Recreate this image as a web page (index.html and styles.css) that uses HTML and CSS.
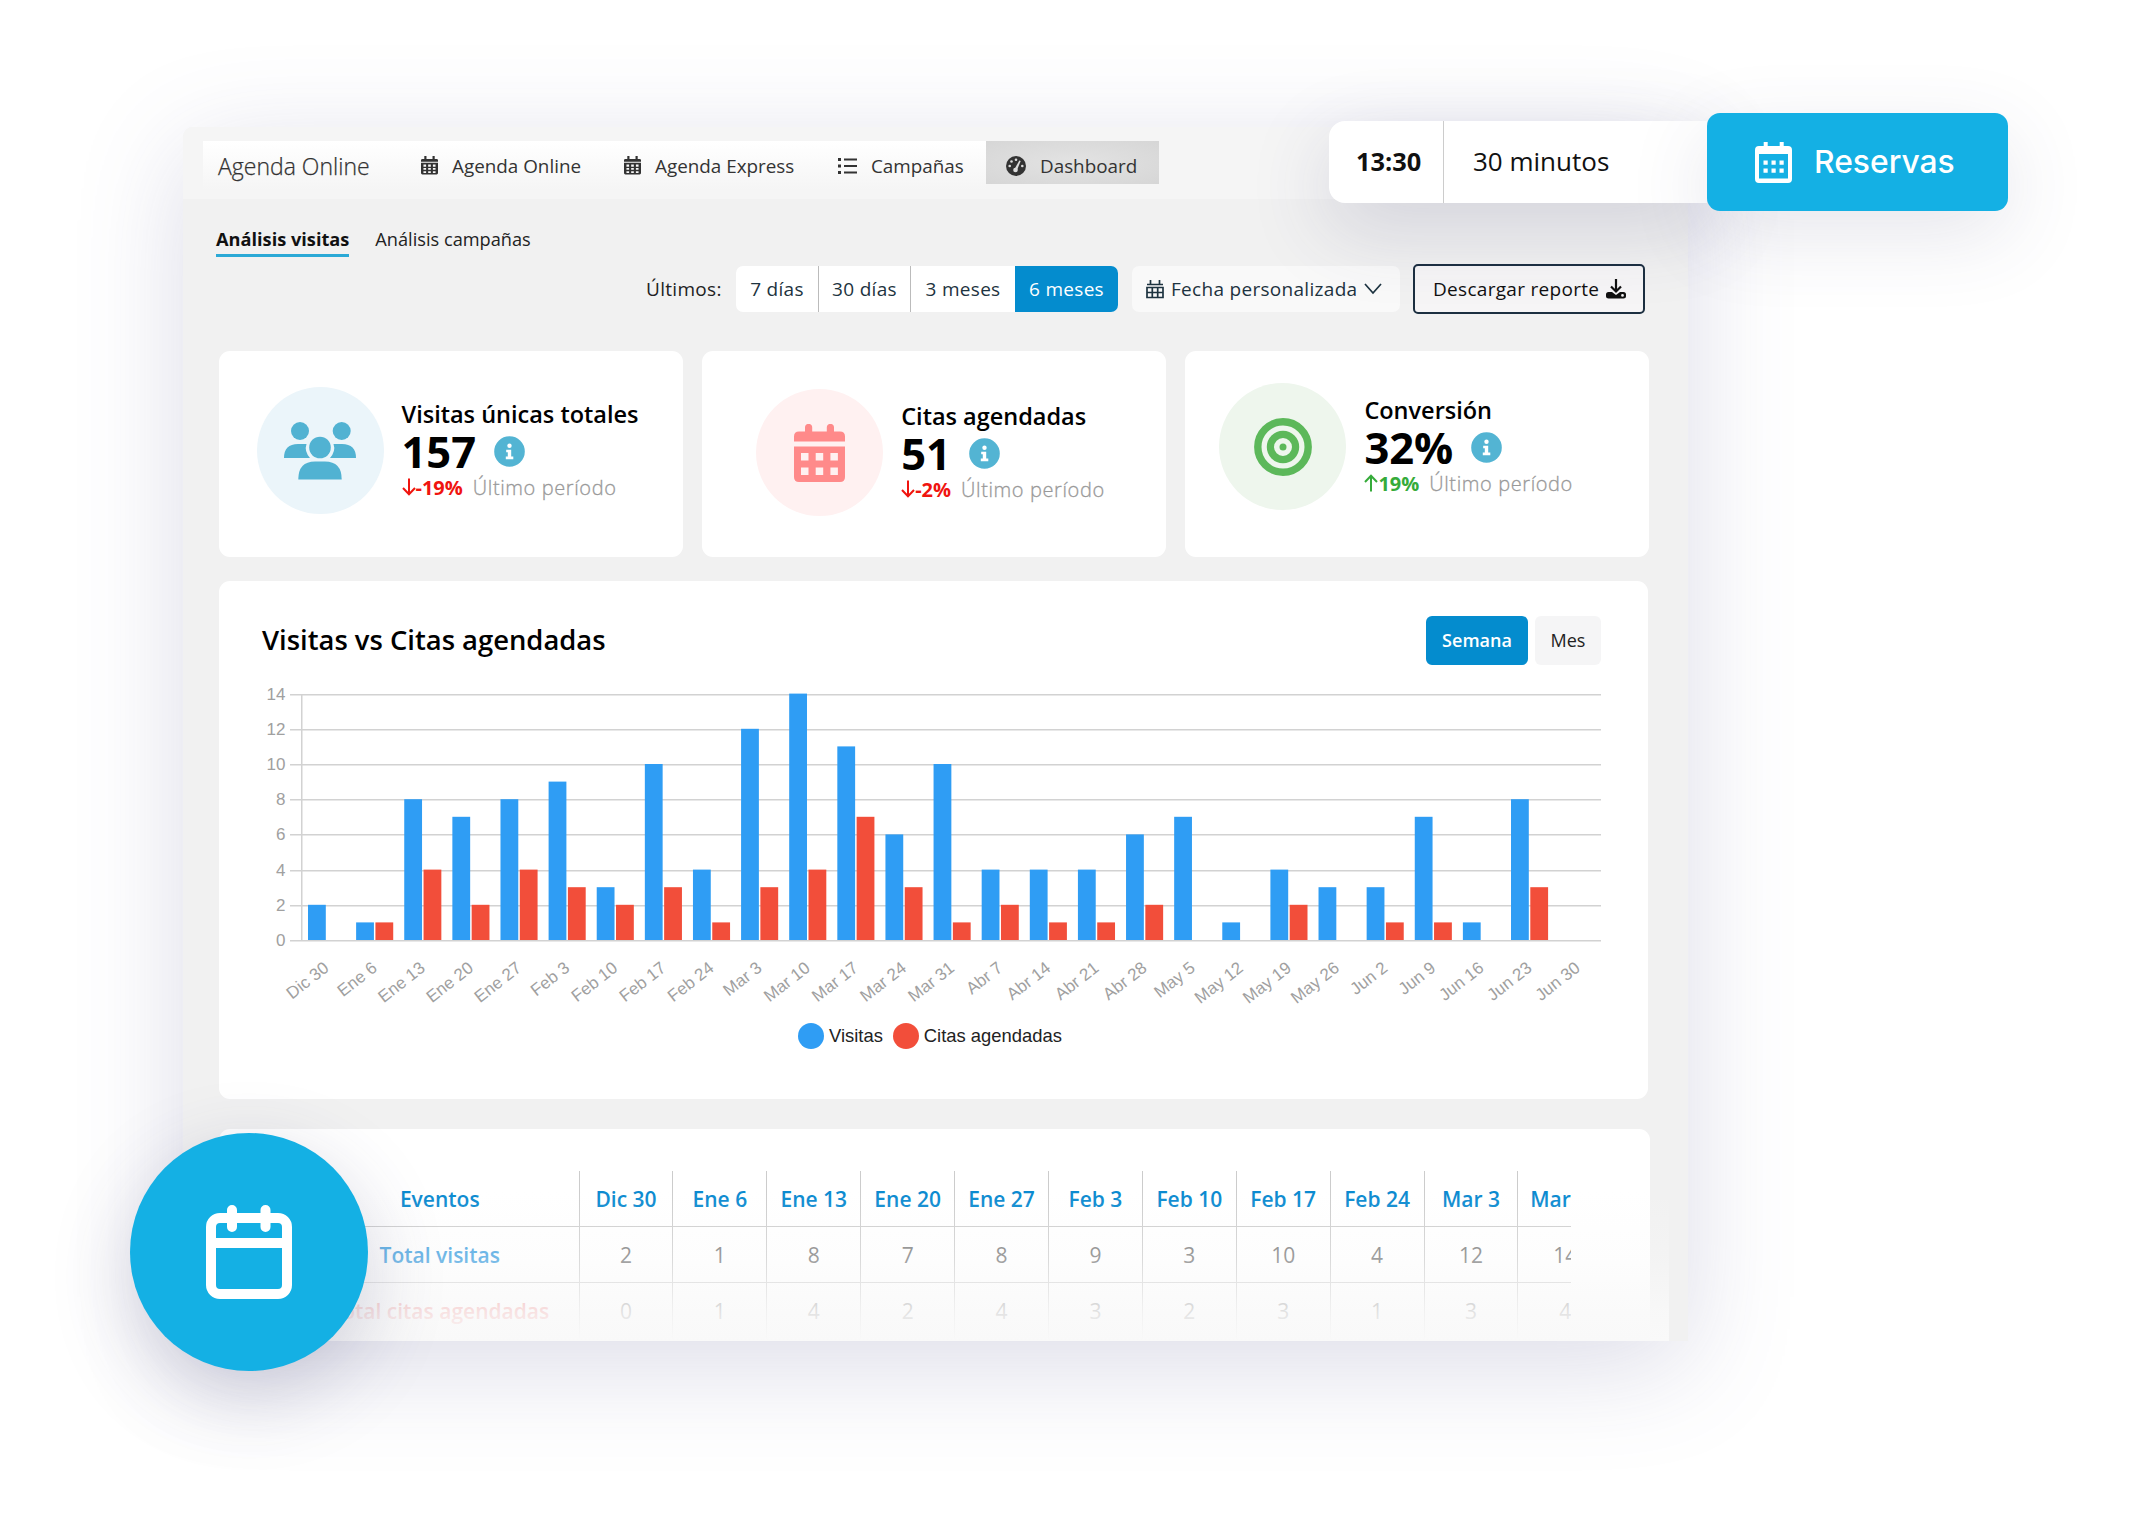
FILE: index.html
```html
<!DOCTYPE html>
<html lang="es">
<head>
<meta charset="utf-8">
<title>Agenda Online</title>
<link rel="stylesheet" href="styles.css">
</head>
<body>
<svg class="sprite" aria-hidden="true">
  <symbol id="i-cal" viewBox="0 0 18 20"><path d="M1.5 3H16.5Q18 3 18 4.5V6H0V4.500Q0 3 1.500 3ZM3.500 0H5.800V4H3.500ZM12.200 0H14.500V4H12.200Z"/><path fill-rule="evenodd" d="M0 7H18V18Q18 19.500 16.500 19.500H1.500Q0 19.500 0 18ZM2.600 9V11.200H5.400V9ZM7.600 9V11.200H10.400V9ZM12.600 9V11.200H15.400V9ZM2.600 12.600V14.600H5.400V12.600ZM7.600 12.600V14.600H10.400V12.600ZM12.600 12.600V14.600H15.400V12.600ZM2.600 16V18H5.400V16ZM7.600 16V18H10.400V16ZM12.600 16V18H15.400V16Z"/></symbol>
  <symbol id="i-info" viewBox="0 0 31 31"><circle cx="15.500" cy="15.500" r="15.300" fill="#53b4d3"/><circle cx="15.500" cy="9.700" r="2.200" fill="#fff"/><path fill="#fff" d="M12.200 13.700H17.200V20.500H19.300V23.200H11.800V20.500H13.800V16.300H12.200Z"/></symbol>
  <symbol id="i-down" viewBox="0 0 14 18"><path d="M7 .5V16M1 10L7 16.300L13 10" fill="none" stroke="currentColor" stroke-width="2"/></symbol>
  <symbol id="i-up" viewBox="0 0 14 18"><path d="M7 17.500V2M1 8L7 1.700L13 8" fill="none" stroke="currentColor" stroke-width="2"/></symbol>
</svg>

<main class="panel">
  <header class="topbar">
    <nav class="nav">
      <span class="brand">Agenda Online</span>
      <a class="nav-item nav-1"><svg class="ic-cal"><use href="#i-cal"/></svg><span>Agenda Online</span></a>
      <a class="nav-item nav-2"><svg class="ic-cal"><use href="#i-cal"/></svg><span>Agenda Express</span></a>
      <a class="nav-item nav-3"><svg class="ic-list" viewBox="0 0 19 16"><path d="M0 0H3V3H0ZM0 6.500H3V9.500H0ZM0 13H3V16H0ZM6 .6H19V2.400H6ZM6 7.100H19V8.900H6ZM6 13.600H19V15.400H6Z"/></svg><span>Campañas</span></a>
    </nav>
    <a class="nav-active"><svg class="ic-dash" viewBox="0 0 20 20"><circle cx="10" cy="10" r="10"/><g fill="#ddd"><circle cx="3.700" cy="10" r="1.300"/><circle cx="5.500" cy="5.500" r="1.300"/><circle cx="10" cy="3.700" r="1.300"/><circle cx="16.300" cy="10" r="1.300"/><circle cx="9.500" cy="14" r="2.300"/><path d="M8.600 13L13.300 4.500L14.700 5.100L11 14Z"/></g></svg><span>Dashboard</span></a>
  </header>

  <div class="tabs">
    <a class="tab tab-on">Análisis visitas</a>
    <a class="tab">Análisis campañas</a>
  </div>

  <div class="filters">
    <span class="label">Últimos:</span>
    <div class="range">
      <button class="r1">7 días</button><button class="r2">30 días</button><button class="r3">3 meses</button><button class="r4">6 meses</button>
    </div>
    <button class="custom"><svg class="ic-grid" viewBox="0 0 18 20"><path d="M1 5.500H17M1 8.500H17V18.500H1ZM1 13.500H17M6.300 8.500V18.500M11.700 8.500V18.500M4.500 1V5M13.500 1V5" fill="none" stroke="currentColor" stroke-width="1.700"/></svg><span>Fecha personalizada</span><svg class="ic-chev" viewBox="0 0 18 12"><path d="M1 1L9 10L17 1" fill="none" stroke="currentColor" stroke-width="1.700"/></svg></button>
    <button class="report"><span>Descargar reporte</span><svg class="ic-dl" viewBox="0 0 20 20"><path d="M10 0V12M5 7.500L10 12.500L15 7.500" fill="none" stroke="currentColor" stroke-width="2.200"/><path fill-rule="evenodd" d="M2.500 13H6L10 16L14 13H17.500Q20 13 20 15.500V17.500Q20 19.500 17.500 19.500H2.500Q0 19.500 0 17.500V15.500Q0 13 2.500 13ZM16.500 15A1.400 1.400 0 1 0 16.500 17.800A1.400 1.400 0 1 0 16.500 15Z"/></svg></button>
  </div>

  <section class="stats">
    <article class="stat stat-a">
      <div class="disc disc-blue"><svg width="72" height="58" viewBox="0 0 72 58"><circle cx="16" cy="9" r="9"/><circle cx="57.700" cy="9" r="9"/><path d="M0 36Q0 22 14 22H22.500Q20 29 26 36ZM72 36Q72 22 58 22H49.500Q52 29 46 36Z"/><circle cx="36" cy="25.500" r="10.800"/><path d="M14.300 57.500Q14.300 39.500 31 39.500H41Q57.700 39.500 57.700 57.500Z"/></svg></div>
      <div class="stat-body">
        <h3>Visitas únicas totales</h3>
        <div class="value"><b>157</b><svg class="info"><use href="#i-info"/></svg></div>
        <div class="delta down"><svg><use href="#i-down"/></svg><b>-19%</b><span>Último período</span></div>
      </div>
    </article>
    <article class="stat stat-b">
      <div class="disc disc-red"><svg width="51" height="58" viewBox="0 0 51 58"><path d="M5 7.500H11V3.500A3.600 3.600 0 0 1 18.200 3.500V7.500H32.800V3.500A3.600 3.600 0 0 1 40 3.500V7.500H46Q51 7.500 51 12.500V17.500H0V12.500Q0 7.500 5 7.500Z"/><path fill-rule="evenodd" d="M0 22.500H51V53Q51 58 46 58H5Q0 58 0 53ZM7 29V36.500H14.500V29ZM21.700 29V36.500H29.200V29ZM36.400 29V36.500H43.900V29ZM7 43.500V51H14.500V43.500ZM21.700 43.500V51H29.200V43.500ZM36.400 43.500V51H43.900V43.500Z"/></svg></div>
      <div class="stat-body">
        <h3>Citas agendadas</h3>
        <div class="value"><b>51</b><svg class="info"><use href="#i-info"/></svg></div>
        <div class="delta down"><svg><use href="#i-down"/></svg><b>-2%</b><span>Último período</span></div>
      </div>
    </article>
    <article class="stat stat-c">
      <div class="disc disc-green"><svg width="58" height="58" viewBox="0 0 58 58"><g fill="none" stroke="currentColor"><circle cx="29" cy="29" r="25.200" stroke-width="7.400"/><circle cx="29" cy="29" r="12.600" stroke-width="7.200"/></g><circle cx="29" cy="29" r="3.500"/></svg></div>
      <div class="stat-body">
        <h3>Conversión</h3>
        <div class="value"><b>32%</b><svg class="info"><use href="#i-info"/></svg></div>
        <div class="delta up"><svg><use href="#i-up"/></svg><b>19%</b><span>Último período</span></div>
      </div>
    </article>
  </section>

  <section class="chart-card">
    <div class="chart-head">
      <h2>Visitas vs Citas agendadas</h2>
      <div class="toggle"><button class="on">Semana</button><button class="off">Mes</button></div>
    </div>
    <svg id="chart" width="1382" height="330" viewBox="240 680 1382 330"></svg>
    <div class="legend"><i class="dot-blue"></i><span>Visitas</span><i class="dot-red"></i><span>Citas agendadas</span></div>
  </section>

  <section class="table-card">
    <div class="table-clip">
      <table>
        <tr><th class="ev">Eventos</th><th>Dic 30</th><th>Ene 6</th><th>Ene 13</th><th>Ene 20</th><th>Ene 27</th><th>Feb 3</th><th>Feb 10</th><th>Feb 17</th><th>Feb 24</th><th>Mar 3</th><th>Mar 10</th></tr>
        <tr><td class="ev visits">Total visitas</td><td>2</td><td>1</td><td>8</td><td>7</td><td>8</td><td>9</td><td>3</td><td>10</td><td>4</td><td>12</td><td>14</td></tr>
        <tr class="last"><td class="ev appts">Total citas agendadas</td><td>0</td><td>1</td><td>4</td><td>2</td><td>4</td><td>3</td><td>2</td><td>3</td><td>1</td><td>3</td><td>4</td></tr>
      </table>
    </div>
  </section>
  <div class="fade"></div>
</main>

<div class="booking">
  <div class="slot"><b>13:30</b><span>30 minutos</span></div>
  <button class="reserve"><svg width="37" height="41" viewBox="0 0 37 41"><path fill-rule="evenodd" d="M4 4H8.700V0H12.700V4H24.700V0H28.700V4H33Q37 4 37 8V37Q37 41 33 41H4Q0 41 0 37V8Q0 4 4 4ZM4 12V36.500H33V12Z"/><path d="M8.500 18.500H12.700V22.700H8.500ZM16.500 18.500H20.700V22.700H16.500ZM24.500 18.500H28.700V22.700H24.500ZM8.500 26.500H12.700V30.700H8.500ZM16.500 26.500H20.700V30.700H16.500ZM24.500 26.500H28.700V30.700H24.500Z"/></svg><span>Reservas</span></button>
</div>
<div class="bubble"><svg width="86" height="94" viewBox="0 0 86 94"><g fill="none" stroke="#fff" stroke-width="10"><rect x="5" y="13" width="76" height="76" rx="9"/><path d="M5 38H81"/><path d="M26 5V22M59.500 5V22" stroke-linecap="round"/></g></svg></div>
<script src="chart.js"></script>
</body>
</html>
```
FILE: styles.css
```css
* { box-sizing: border-box; margin: 0; }
body { position: relative; width: 2145px; height: 1524px; overflow: hidden; background: #fff; font-family: "Open Sans", "Noto Sans", sans-serif; color: #222; padding: 127px 0 0 183px; }
button { border: 0; padding: 0; background: none; font: inherit; color: inherit; letter-spacing: inherit; }
svg { display: block; flex: none; fill: currentColor; }
.sprite { position: absolute; width: 0; height: 0; }
.panel { position: relative; width: 1505px; height: 1214px; background: #f1f1f1; border-radius: 10px 0 0 0; box-shadow: 0 24px 110px rgba(80, 80, 140, .2); }

.topbar { display: flex; height: 72px; padding: 14px 0 0 20px; background: #f5f5f5; border-radius: 10px 0 0 0; color: #333; font-size: 18.850px; }
.nav { display: flex; align-items: center; width: 783px; height: 49px; background: linear-gradient(#fff, #f5f5f5); padding-left: 15px; }
.brand { font-size: 23px; font-weight: 300; width: 203px; -webkit-text-stroke: .25px; }
.nav-item { display: flex; align-items: center; gap: 14px; }
.nav-1 { width: 203px; } .nav-2 { width: 214px; }
.ic-cal { width: 17px; height: 19px; }
.ic-list { width: 19px; height: 16px; }
.nav-active { display: flex; align-items: center; gap: 14px; width: 173px; height: 43px; padding-left: 20px; padding-top: 6px; background: radial-gradient(#e3e3e3, #d6d6d6); }
.ic-dash { width: 20px; height: 20px; }

.tabs { display: flex; gap: 26px; padding: 26px 0 0 33px; height: 65px; font-size: 18.200px; color: #222; }
.tab { height: 32px; line-height: 28px; }
.tab-on { font-weight: 700; color: #111; border-bottom: 3px solid #2ba9d6; }

.filters { display: flex; align-items: center; height: 50px; padding-left: 463px; font-size: 19px; letter-spacing: .3px; color: #222; }
.label { width: 90px; }
.range { display: flex; width: 382px; height: 46px; border-radius: 7px; overflow: hidden; background: #fff; color: #1d3340; }
.range button { border-right: 1px solid #bbb; }
.range .r1 { width: 83px; } .r2 { width: 92px; } .range .r3 { width: 104px; border: 0; }
.range .r4 { width: 103px; border: 0; background: #048cce; color: #fff; }
.custom { display: flex; align-items: center; margin-left: 14px; width: 268px; height: 46px; border-radius: 7px; background: #f9f9f9; padding-left: 14px; gap: 7px; color: #1d3340; }
.ic-grid { width: 18px; height: 20px; } .ic-chev { width: 18px; height: 12px; }
.report { display: flex; align-items: center; gap: 7px; margin-left: 13px; width: 232px; height: 50px; padding-left: 18px; border: 2px solid #1c2f40; border-radius: 5px; background: #f6f5f6; color: #111; }
.ic-dl { width: 20px; height: 20px; }

.stats { display: flex; gap: 19.200px; margin: 37px 0 0 36px; }
.stat { display: flex; width: 464px; height: 206px; border-radius: 11px; background: #fff; padding: 36px 0 0 37.500px; }
.stat-b { padding: 38px 0 0 54px; } .stat-c { padding: 32px 0 0 34px; }
.disc { display: flex; align-items: center; justify-content: center; width: 127px; height: 127px; border-radius: 50%; margin-right: 18px; }
.disc-blue { background: #ebf5fa; color: #51b2d2; } .disc-red { background: #fff1f1; color: #ff8a8a; } .disc-green { background: #eef6ed; color: #5cb85a; }
.stat-body { padding-top: 11px; color: #000; }
h3 { font-size: 23.500px; line-height: 33px; font-weight: 600; white-space: nowrap; }
.value { display: flex; align-items: center; height: 41px; }
.value b { font-size: 43.500px; line-height: 42px; font-weight: 700; margin-right: 18px; }
.info { width: 31px; height: 31px; }
.delta { display: flex; align-items: center; height: 30px; font-size: 20px; }
.delta svg { width: 14px; height: 18px; }
.delta b { font-weight: 700; margin-right: 10px; }
.delta span { color: #999; font-weight: 300; letter-spacing: .6px; -webkit-text-stroke: .3px; }
.down { color: #f0140f; } .up { color: #36ab3a; }

.chart-card { width: 1429px; height: 518px; margin: 24px 0 0 36px; background: #fff; border-radius: 11px; padding-top: 34px; }
.chart-head { display: flex; justify-content: space-between; align-items: center; height: 50px; padding: 0 47px 0 43px; }
h2 { font-size: 27.400px; font-weight: 600; color: #000; padding-bottom: 2px; }
.toggle { display: flex; gap: 7px; font-size: 18px; }
.toggle .on { width: 102px; height: 49px; border-radius: 6px; background: #048cce; color: #fff; font-weight: 600; }
.toggle .off { width: 66px; height: 49px; border-radius: 6px; background: #f5f5f6; color: #222; }
#chart { margin: 15px 0 0 21px; }
#chart text { font-family: "Liberation Sans", Arial, sans-serif; font-size: 17px; fill: #a0a0a0; text-anchor: end; }
.legend { display: flex; align-items: center; margin-left: 579px; margin-top: 13px; height: 26px; font: 18.400px "Liberation Sans", Arial, sans-serif; color: #222; }
.legend i { width: 26px; height: 26px; border-radius: 50%; margin-right: 5px; }
.dot-blue { background: #2f9df4; } .dot-red { background: #f24e3a; }
.legend .dot-red { margin-left: 10px; }

.table-card { width: 1431px; height: 212px; margin: 30px 0 0 36px; background: #fff; border-radius: 11px 11px 0 0; padding: 42px 0 0 82px; }
.table-clip { width: 1270px; height: 170px; overflow: hidden; }
table { border-collapse: collapse; table-layout: fixed; width: 1311px; font-size: 21px; color: #777; text-align: center; }
th, td { width: 93.900px; height: 56.500px; padding: 2px 0 0; border-left: 1px solid #ccc; border-bottom: 1px solid #ccc; white-space: nowrap; }
.last td { padding-top: 0; }
th { font-weight: 600; color: #0a8ad0; height: 55px; }
.ev { width: 278px; border-left: 0; }
.visits, .appts { font-weight: 600; color: #3a9ee0; }
.appts { color: #f07070; }
.fade { position: absolute; left: 0; bottom: 0; width: 1486px; height: 150px; background: linear-gradient(rgba(249,249,249,0), rgba(249,249,249,.3) 45%, rgba(249,249,249,.82) 80%, #f9f9f9); }

.booking { position: absolute; left: 1329px; top: 113px; display: flex; align-items: center; }
.slot { display: flex; align-items: center; width: 378px; height: 82px; background: #fff; border-radius: 16px 0 0 16px; font-size: 26px; color: #111; box-shadow: 0 24px 80px rgba(60, 60, 110, .18); }
.slot b { display: flex; align-items: center; width: 115px; height: 82px; padding: 0 0 2px 27px; font-size: 25.400px; border-right: 1px solid #ccc; }
.slot span { margin-left: 29px; padding-bottom: 2px; }
.reserve { display: flex; align-items: center; gap: 22px; width: 301px; height: 98px; padding-left: 48px; border-radius: 13px; background: #14b0e4; color: #fff; font: 500 31.800px Inter, sans-serif; box-shadow: 0 24px 80px rgba(60, 60, 110, .13); position: relative; }
.reserve span { padding-bottom: 2px; }
.bubble { position: absolute; left: 130px; top: 1133px; width: 238px; height: 238px; border-radius: 50%; background: #14b0e4; display: flex; align-items: center; justify-content: center; box-shadow: 0 24px 80px rgba(60, 60, 110, .22); }
```
FILE: chart.js
```js
const weeks = ["Dic 30","Ene 6","Ene 13","Ene 20","Ene 27","Feb 3","Feb 10","Feb 17","Feb 24","Mar 3","Mar 10","Mar 17","Mar 24","Mar 31","Abr 7","Abr 14","Abr 21","Abr 28","May 5","May 12","May 19","May 26","Jun 2","Jun 9","Jun 16","Jun 23","Jun 30"];
const visits = [2,1,8,7,8,9,3,10,4,12,14,11,6,10,4,4,4,6,7,1,4,3,3,7,1,8,0];
const appts = [0,1,4,2,4,3,2,3,1,3,4,7,3,1,2,1,1,2,0,0,2,0,1,1,0,3,0];
const x0 = 302, y0 = 940, unit = 17.6, step = 48.12;
let out = "";
for (let v = 0; v <= 14; v += 2) {
  const y = Math.round(y0 - v * unit);
  out += `<rect x="290" y="${y}" width="1311" height="1.500" fill="#d2d2d2"/><text x="285.500" y="${y + 5.5}">${v}</text>`;
}
out += `<rect x="301" y="694" width="1.500" height="247" fill="#d2d2d2"/>`;
weeks.forEach((w, i) => {
  const x = x0 + i * step;
  const bar = (dx, v, c) => v ? `<rect x="${x + dx}" y="${y0 - v * unit}" width="17.800" height="${v * unit}" fill="${c}"/>` : "";
  out += bar(6, visits[i], "#2f9df4") + bar(25.3, appts[i], "#f24e3a");
  out += `<text transform="translate(${x + 28} 970) rotate(-38)">${w}</text>`;
});
document.getElementById("chart").innerHTML = out;
```
